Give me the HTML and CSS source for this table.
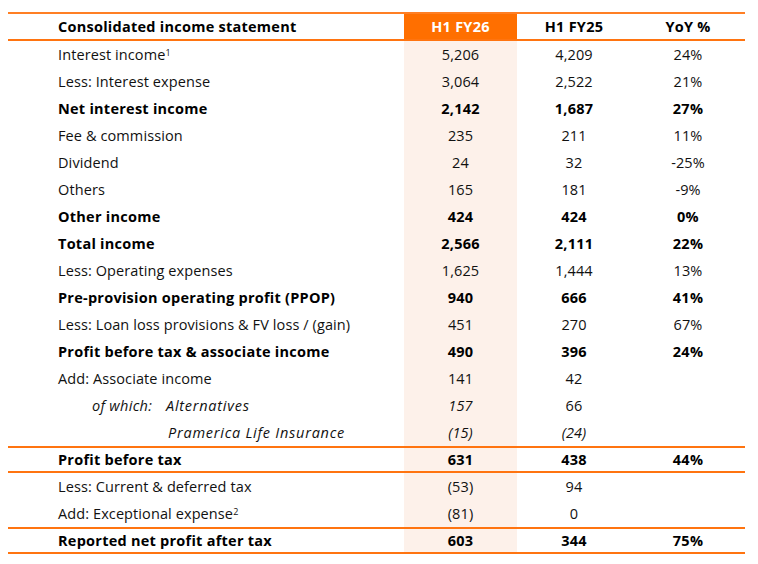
FILE: index.html
```html
<!DOCTYPE html>
<html lang="en">
<head>
<meta charset="utf-8">
<title>Consolidated income statement</title>
<link rel="stylesheet" href="styles.css">
</head>
<body>
<div class="stmt">
  <div class="row head">
    <div class="label">Consolidated income statement</div>
    <div class="val cur">H1 FY26</div>
    <div class="val">H1 FY25</div>
    <div class="val">YoY %</div>
  </div>
  <div class="row">
    <div class="label">Interest income<sup>1</sup></div>
    <div class="val cur">5,206</div><div class="val">4,209</div><div class="val">24%</div>
  </div>
  <div class="row">
    <div class="label">Less: Interest expense</div>
    <div class="val cur">3,064</div><div class="val">2,522</div><div class="val">21%</div>
  </div>
  <div class="row bold">
    <div class="label">Net interest income</div>
    <div class="val cur">2,142</div><div class="val">1,687</div><div class="val">27%</div>
  </div>
  <div class="row">
    <div class="label">Fee &amp; commission</div>
    <div class="val cur">235</div><div class="val">211</div><div class="val">11%</div>
  </div>
  <div class="row">
    <div class="label">Dividend</div>
    <div class="val cur">24</div><div class="val">32</div><div class="val">-25%</div>
  </div>
  <div class="row">
    <div class="label">Others</div>
    <div class="val cur">165</div><div class="val">181</div><div class="val">-9%</div>
  </div>
  <div class="row bold">
    <div class="label">Other income</div>
    <div class="val cur">424</div><div class="val">424</div><div class="val">0%</div>
  </div>
  <div class="row bold">
    <div class="label">Total income</div>
    <div class="val cur">2,566</div><div class="val">2,111</div><div class="val">22%</div>
  </div>
  <div class="row">
    <div class="label">Less: Operating expenses</div>
    <div class="val cur">1,625</div><div class="val">1,444</div><div class="val">13%</div>
  </div>
  <div class="row bold">
    <div class="label">Pre-provision operating profit (PPOP)</div>
    <div class="val cur">940</div><div class="val">666</div><div class="val">41%</div>
  </div>
  <div class="row">
    <div class="label">Less: Loan loss provisions &amp; FV loss / (gain)</div>
    <div class="val cur">451</div><div class="val">270</div><div class="val">67%</div>
  </div>
  <div class="row bold">
    <div class="label">Profit before tax &amp; associate income</div>
    <div class="val cur">490</div><div class="val">396</div><div class="val">24%</div>
  </div>
  <div class="row">
    <div class="label">Add: Associate income</div>
    <div class="val cur">141</div><div class="val">42</div><div class="val"></div>
  </div>
  <div class="row">
    <div class="label sub"><span class="of">of which:</span><span class="subname">Alternatives</span></div>
    <div class="val cur it">157</div><div class="val">66</div><div class="val"></div>
  </div>
  <div class="row">
    <div class="label sub"><span class="of"></span><span class="subname alt">Pramerica Life Insurance</span></div>
    <div class="val cur it">(15)</div><div class="val it">(24)</div><div class="val"></div>
  </div>
  <div class="row bold ruled">
    <div class="label">Profit before tax</div>
    <div class="val cur">631</div><div class="val">438</div><div class="val">44%</div>
  </div>
  <div class="row">
    <div class="label">Less: Current &amp; deferred tax</div>
    <div class="val cur">(53)</div><div class="val">94</div><div class="val"></div>
  </div>
  <div class="row">
    <div class="label">Add: Exceptional expense<sup>2</sup></div>
    <div class="val cur">(81)</div><div class="val">0</div><div class="val"></div>
  </div>
  <div class="row bold ruled last">
    <div class="label">Reported net profit after tax</div>
    <div class="val cur">603</div><div class="val">344</div><div class="val">75%</div>
  </div>
</div>
</body>
</html>
```

FILE: styles.css
```css
html, body {
  margin: 0;
  padding: 0;
  background: #ffffff;
}
body {
  padding: 12px 8px 0 8px;
  font-family: "Open Sans", "Liberation Sans", sans-serif;
  font-size: 14.5px;
  letter-spacing: 0.1px;
  color: #111111;
}
.stmt {
  width: 737px;
}
.row {
  display: grid;
  grid-template-columns: 396px 113px 114px 114px;
  height: 27px;
  box-sizing: border-box;
}
.row > div {
  display: flex;
  align-items: center;
}
.label {
  padding-left: 50px;
  white-space: nowrap;
}
.val {
  justify-content: center;
}
.cur {
  background: #fdf1ea;
}
.bold {
  font-weight: 700;
  letter-spacing: 0.25px;
  color: #000000;
}
.head {
  height: 29px;
  border-top: 2px solid #ff7f24;
  border-bottom: 2px solid #ff7410;
  font-weight: 700;
  letter-spacing: 0.25px;
  color: #000000;
}
.head .cur {
  background: #ff6f00;
  color: #ffffff;
}
.ruled {
  border-top: 2px solid #ff7410;
  border-bottom: 2px solid #ff7410;
}
.sub {
  font-style: italic;
}
.of {
  display: inline-block;
  width: 73px;
  padding-left: 34px;
  letter-spacing: 0.3px;
}
.subname {
  letter-spacing: 0.75px;
  padding-left: 1px;
}
.subname.alt {
  padding-left: 3px;
}
.it {
  font-style: italic;
}
sup {
  font-size: 9px;
  line-height: 0;
  position: relative;
  top: -2px;
  vertical-align: super;
}
```
